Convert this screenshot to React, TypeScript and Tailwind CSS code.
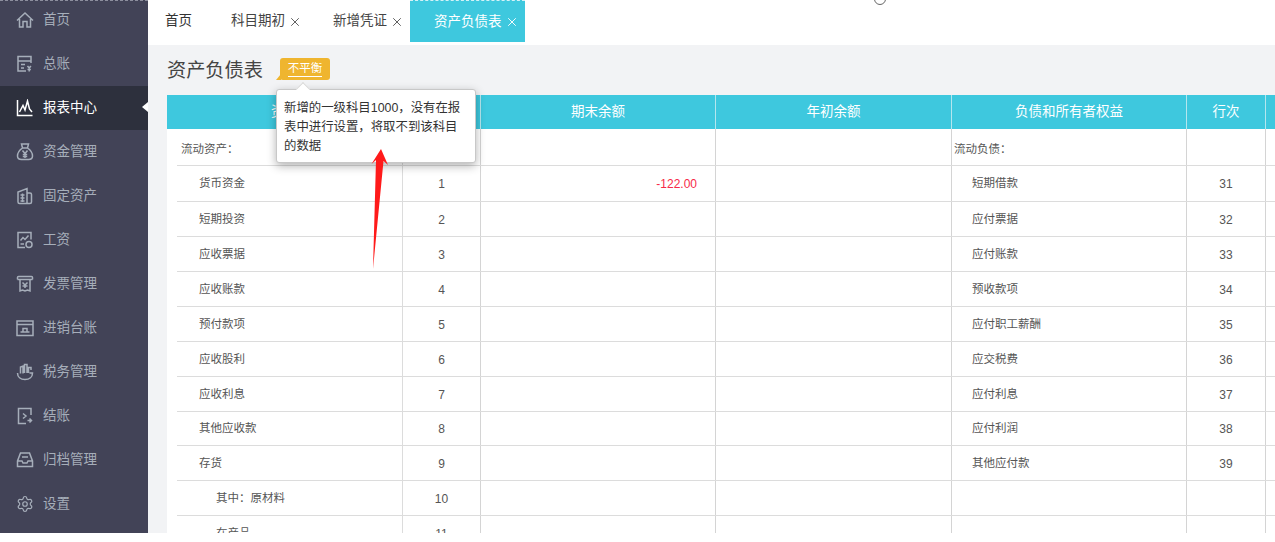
import { Settings, X } from "lucide-react";

const iconClass = "w-[18px] h-[18px] fill-none stroke-current stroke-[1.5]";

const icons: Record<string, React.ReactNode> = {
  home: <svg viewBox="0 0 18 18" className={iconClass}><path d="M1 9.500 9 2l8 7.500M3.500 8v8h3.500v-5.500h4V16h3.500V8" /></svg>,
  ledger: <svg viewBox="0 0 18 18" className={iconClass}><path d="M15 8V1.500H2V16h8M2 6h13M5 9.500h4M5 13h3M11.500 11l1.700 2 1.700-2M13.200 13v3.500M11.500 14.500h3.400" /></svg>,
  chart: <svg viewBox="0 0 18 18" className={iconClass}><path d="M1.500 1v15.500h15M3.500 13 7 6.500l2 4.500 2.500-9 2 8 2.500 3" /></svg>,
  bag: <svg viewBox="0 0 18 18" className={iconClass}><path d="M5.500 1h7L11.500 5h-5zM6.500 5C3.500 7 1.500 10 1.500 13c0 2.500 2 3.500 4 3.500h7c2 0 4-1 4-3.500 0-3-2-6-5-8M6.500 7.500 9 10.500l2.500-3M9 10.500V15M6.800 11.500h4.400M6.800 13.500h4.400" /></svg>,
  building: <svg viewBox="0 0 18 18" className={iconClass}><path d="M11 16.500H3.500q-1.500 0-1.500-1.500V5l9-3.500zM11 6h3q1.500 0 1.500 1.500V15q0 1.500-1.500 1.500h-3M4.500 8h4M4.500 11h4M4.500 14h4M6.500 6.500V15" /></svg>,
  payroll: <svg viewBox="0 0 18 18" className={iconClass}><path d="M9 16.500H2V1.500h13v7M4.500 9.500 7 6.500l2 2 3.500-4M4.500 13H8" /><circle cx="13" cy="13.500" r="3" /></svg>,
  invoice: <svg viewBox="0 0 18 18" className={iconClass}><path d="M1.500 4.500V2.500q0-1 1-1h13q1 0 1 1v2M1.500 4.500h15M4 4.500V16l2.500-1L9 16l2.500-1 2.500 1V4.500M6.500 7.500 9 10l2.500-2.500M9 10v3M6.500 11h5" /></svg>,
  ledgerBox: <svg viewBox="0 0 18 18" className={iconClass}><path d="M1 2h16v14.500H1zM1 5.500h16M4.500 13h9M7 13V9.500h4V13" /></svg>,
  tax: <svg viewBox="0 0 18 18" className={iconClass}><path d="M1.500 10c0 4 3 6.500 7.500 6.500s7.500-2.500 7.500-6.500h-3M4.500 10.500V4l2.500-1v7.500M8.500 10V1.500h2.500V10M12.500 10V4.500h2.500V7" /></svg>,
  close: <svg viewBox="0 0 18 18" className={iconClass}><path d="M15 8V1.500H2.500v15H10M7 6.500 10 9l-3 2.500M11.500 13.500h4M13.500 11.500l2 2-2 2" /></svg>,
  archive: <svg viewBox="0 0 18 18" className={iconClass}><path d="M4.500 2h9l3 8v5.500H1.500V10zM1.500 10h4.500l1 2h4l1-2h4.500M6 6h6" /></svg>,
};

const menu = [
  { label: "首页", icon: icons.home },
  { label: "总账", icon: icons.ledger },
  { label: "报表中心", icon: icons.chart, active: true },
  { label: "资金管理", icon: icons.bag },
  { label: "固定资产", icon: icons.building },
  { label: "工资", icon: icons.payroll },
  { label: "发票管理", icon: icons.invoice },
  { label: "进销台账", icon: icons.ledgerBox },
  { label: "税务管理", icon: icons.tax },
  { label: "结账", icon: icons.close },
  { label: "归档管理", icon: icons.archive },
  { label: "设置", icon: <Settings size={18} strokeWidth={1.6} /> },
];

const rows = [
  { left: "流动资产：", indent: 0, no: "", right: "流动负债：", rightIndent: 0, rightNo: "", h: "h-[37px]", pt: "pt-[6px]" },
  { left: "货币资金", indent: 1, no: "1", amount: "-122.00", right: "短期借款", rightIndent: 1, rightNo: "31", h: "h-[36px]" },
  { left: "短期投资", indent: 1, no: "2", right: "应付票据", rightIndent: 1, rightNo: "32" },
  { left: "应收票据", indent: 1, no: "3", right: "应付账款", rightIndent: 1, rightNo: "33" },
  { left: "应收账款", indent: 1, no: "4", right: "预收款项", rightIndent: 1, rightNo: "34" },
  { left: "预付款项", indent: 1, no: "5", right: "应付职工薪酬", rightIndent: 1, rightNo: "35" },
  { left: "应收股利", indent: 1, no: "6", right: "应交税费", rightIndent: 1, rightNo: "36" },
  { left: "应收利息", indent: 1, no: "7", right: "应付利息", rightIndent: 1, rightNo: "37" },
  { left: "其他应收款", indent: 1, no: "8", right: "应付利润", rightIndent: 1, rightNo: "38", h: "h-[34px]" },
  { left: "存货", indent: 1, no: "9", right: "其他应付款", rightIndent: 1, rightNo: "39" },
  { left: "其中：原材料", indent: 2, no: "10", right: "", rightIndent: 0, rightNo: "" },
  { left: "在产品", indent: 2, no: "11", right: "", rightIndent: 0, rightNo: "" },
];

const indentClass = ["pl-[4px]", "pl-[22px]", "pl-[39px]"];
const rightIndentClass = ["pl-[2px]", "pl-[20px]"];

function Tab({ label, className, active }: { label: string; className: string; active?: boolean }) {
  return (
    <div className={`flex h-[42px] items-center pl-[24px] pt-[1px] text-[13.5px] ${className} ${active ? "border-t border-dashed border-[#d5f2f7] bg-[#3ec8de] text-white" : "text-[#444]"}`}>
      <span>{label}</span>
      <X size={14} strokeWidth={1.6} className={`ml-[3px] ${active ? "text-white" : "text-[#555]"}`} />
    </div>
  );
}

export default function App() {
  return (
    <div className="relative flex h-[533px] w-[1275px] overflow-hidden bg-white font-['Liberation_Sans','Noto_Sans_CJK_SC',sans-serif]">
      <aside className="relative w-[148px] shrink-0 overflow-hidden border-t border-dashed border-[#8d8f9e] bg-[#424357]">
        <nav className="-mt-[3px]">
          {menu.map((item) => (
            <div
              key={item.label}
              className={`flex h-[44px] items-center gap-[9px] pl-[16px] text-[13.5px] ${item.active ? "bg-[#2d303d] text-white" : "text-[#a6aeba]"}`}
            >
              {item.icon}
              <span className="pt-[1px]">{item.label}</span>
            </div>
          ))}
        </nav>
        <div className="absolute right-0 top-[101px] h-0 w-0 border-y-[5px] border-r-[6px] border-y-transparent border-r-white" />
      </aside>

      <main className="flex min-w-0 flex-1 flex-col bg-[#f2f3f5]">
        <div className="flex h-[45px] shrink-0 bg-white pb-[3px]">
          <div className="flex h-[42px] w-[59px] items-center pl-[17px] pt-[1px] text-[13.5px] text-[#333]">首页</div>
          <Tab label="科目期初" className="w-[102px]" />
          <Tab label="新增凭证" className="w-[101px]" />
          <Tab label="资产负债表" className="w-[115px]" active />
        </div>

        <div className="flex h-[50px] shrink-0 items-center pl-[19px]">
          <h1 className="pt-[3px] text-[19.2px] font-normal text-[#444]">资产负债表</h1>
          <div className="relative ml-[17px] mt-[-3px] flex h-[22px] w-[50px] items-center justify-center rounded-[3px] bg-[#efb52f] text-[11.5px] text-white">
            <span className="border-b border-white leading-[15px]">不平衡</span>
            <div className="absolute -left-[4px] bottom-0 h-0 w-0 border-b-[6px] border-l-[5px] border-b-[#efb52f] border-l-transparent" />
          </div>
        </div>

        <div className="ml-[19px] flex-1">
          <div className="flex h-[34px] bg-[#3ec8de] text-[13.5px] text-white">
            <div className="flex w-[236px] shrink-0 items-center justify-center border-r border-[#b4e6ee] pt-[1px]">资产</div>
            <div className="flex w-[78px] shrink-0 items-center justify-center border-r border-[#b4e6ee] pt-[1px]">行次</div>
            <div className="flex w-[235px] shrink-0 items-center justify-center border-r border-[#b4e6ee] pt-[1px]">期末余额</div>
            <div className="flex w-[236px] shrink-0 items-center justify-center border-r border-[#b4e6ee] pt-[1px]">年初余额</div>
            <div className="flex w-[235px] shrink-0 items-center justify-center border-r border-[#b4e6ee] pt-[1px]">负债和所有者权益</div>
            <div className="flex w-[79px] shrink-0 items-center justify-center border-r border-[#b4e6ee] pt-[1px]">行次</div>
            <div className="flex-1" />
          </div>
          <div className="bg-white pl-[10px] text-[11.5px] text-[#555]">
            {rows.map((row) => {
              const pt = row.pt ?? "pt-[1px]";
              return (
                <div key={row.left} className={`flex border-b border-[#dcdcdc] ${row.h ?? "h-[35px]"}`}>
                  <div className={`flex w-[226px] shrink-0 items-center border-r border-[#dcdcdc] ${pt} ${indentClass[row.indent]}`}>{row.left}</div>
                  <div className={`flex w-[78px] shrink-0 items-center justify-center border-r border-[#d4d4d4] text-[12px] ${pt}`}>{row.no}</div>
                  <div className={`flex w-[235px] shrink-0 items-center justify-end border-r border-[#d4d4d4] pr-[18px] text-[12px] text-[#f72a48] ${pt}`}>{row.amount}</div>
                  <div className="w-[236px] shrink-0 border-r border-[#d4d4d4]" />
                  <div className={`flex w-[235px] shrink-0 items-center border-r border-[#d4d4d4] ${pt} ${rightIndentClass[row.rightIndent]}`}>{row.right}</div>
                  <div className={`flex w-[79px] shrink-0 items-center justify-center border-r border-[#d4d4d4] text-[12px] ${pt}`}>{row.rightNo}</div>
                  <div className="flex-1" />
                </div>
              );
            })}
          </div>
        </div>
      </main>

      <div className="absolute left-[276px] top-[89px] h-[74px] w-[200px] rounded-[3px] border border-[#c8c8c8] bg-white py-[9px] pl-[7px] pr-[7px] text-[12.4px] leading-[19px] text-[#333] shadow-[0_3px_10px_rgba(0,0,0,0.3)]">
        <div className="absolute -top-[6px] left-[21px] h-[10px] w-[10px] rotate-45 border-l border-t border-[#d8d8d8] bg-white" />
        <p className="relative">新增的一级科目1000，没有在报表中进行设置，将取不到该科目的数据</p>
      </div>

      <svg className="absolute left-[360px] top-[145px] h-[130px] w-[40px]" viewBox="0 0 40 130">
        <path d="M21 4 28 20 23.500 16 13 124 16 15 11.500 19Z" fill="#ff1a1a" />
      </svg>

      <div className="absolute left-[874px] -top-[7px] h-[12px] w-[12px] rounded-full border border-[#666] bg-white" />
    </div>
  );
}
